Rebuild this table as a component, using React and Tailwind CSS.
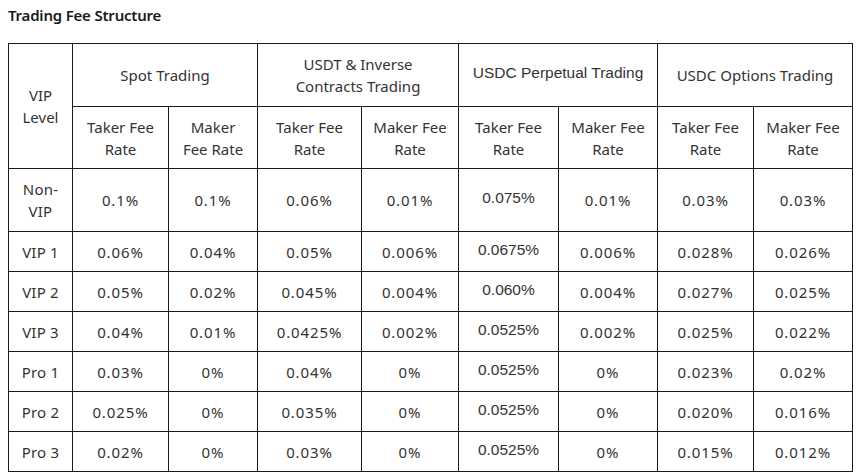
import React from "react";

const plex = "font-['Noto_Sans',sans-serif]";
const arial = "font-['Liberation_Sans',Arial,sans-serif]";

const rows = [
  ["Non-VIP", "0.1%", "0.1%", "0.06%", "0.01%", "0.075%", "0.01%", "0.03%", "0.03%"],
  ["VIP 1", "0.06%", "0.04%", "0.05%", "0.006%", "0.0675%", "0.006%", "0.028%", "0.026%"],
  ["VIP 2", "0.05%", "0.02%", "0.045%", "0.004%", "0.060%", "0.004%", "0.027%", "0.025%"],
  ["VIP 3", "0.04%", "0.01%", "0.0425%", "0.002%", "0.0525%", "0.002%", "0.025%", "0.022%"],
  ["Pro 1", "0.03%", "0%", "0.04%", "0%", "0.0525%", "0%", "0.023%", "0.02%"],
  ["Pro 2", "0.025%", "0%", "0.035%", "0%", "0.0525%", "0%", "0.020%", "0.016%"],
  ["Pro 3", "0.02%", "0%", "0.03%", "0%", "0.0525%", "0%", "0.015%", "0.012%"],
];

const widths = [64, 96, 89, 104, 97, 100, 99, 96, 99];

function Cell({ children, perp, className = "", ...rest }) {
  return (
    <td
      {...rest}
      className={
        "border border-[#1a1a1a] px-1 text-center align-middle leading-[22px] " +
        (perp ? arial + " text-[15.5px] " : plex + " text-[15px] ") +
        className
      }
    >
      {children}
    </td>
  );
}

export default function App() {
  return (
    <div className={"bg-white w-[859px] h-[476px] pl-2 pt-[4px] text-[#333] " + plex}>
      <h3 className="text-[15px] font-semibold leading-[22px] text-[#1a1a1a] tracking-[-0.2px] mb-[17px]">
        Trading Fee Structure
      </h3>

      <table className="table-fixed border-collapse w-[845px]">
        <colgroup>
          {widths.map((w, i) => (
            <col key={i} style={{ width: w }} />
          ))}
        </colgroup>
        <thead>
          <tr className="h-[63px]">
            <Cell rowSpan={2}>
              VIP
              <br />
              Level
            </Cell>
            <Cell colSpan={2}>Spot Trading</Cell>
            <Cell colSpan={2}>
              USDT &amp; Inverse
              <br />
              Contracts Trading
            </Cell>
            <Cell colSpan={2} perp className="pb-[4px]">
              USDC Perpetual Trading
            </Cell>
            <Cell colSpan={2}>USDC Options Trading</Cell>
          </tr>
          <tr className="h-[62px]">
            <Cell>
              Taker Fee
              <br />
              Rate
            </Cell>
            <Cell>
              Maker
              <br />
              Fee Rate
            </Cell>
            <Cell>
              Taker Fee
              <br />
              Rate
            </Cell>
            <Cell>
              Maker Fee
              <br />
              Rate
            </Cell>
            <Cell>
              Taker Fee
              <br />
              Rate
            </Cell>
            <Cell>
              Maker Fee
              <br />
              Rate
            </Cell>
            <Cell>
              Taker Fee
              <br />
              Rate
            </Cell>
            <Cell>
              Maker Fee
              <br />
              Rate
            </Cell>
          </tr>
        </thead>
        <tbody>
          {rows.map((r, ri) => (
            <tr key={ri} className={ri === 0 ? "h-[63px]" : "h-[40px]"}>
              {r.map((v, ci) => (
                <Cell
                  key={ci}
                  perp={ci === 5}
                  className={
                    ci === 5
                      ? "pb-[4px]"
                      : ci === 0
                      ? "tracking-[0.2px]"
                      : "tracking-[0.9px]"
                  }
                >
                  {ci === 0 && v === "Non-VIP" ? (
                    <>
                      Non-
                      <br />
                      VIP
                    </>
                  ) : (
                    v
                  )}
                </Cell>
              ))}
            </tr>
          ))}
        </tbody>
      </table>
    </div>
  );
}
